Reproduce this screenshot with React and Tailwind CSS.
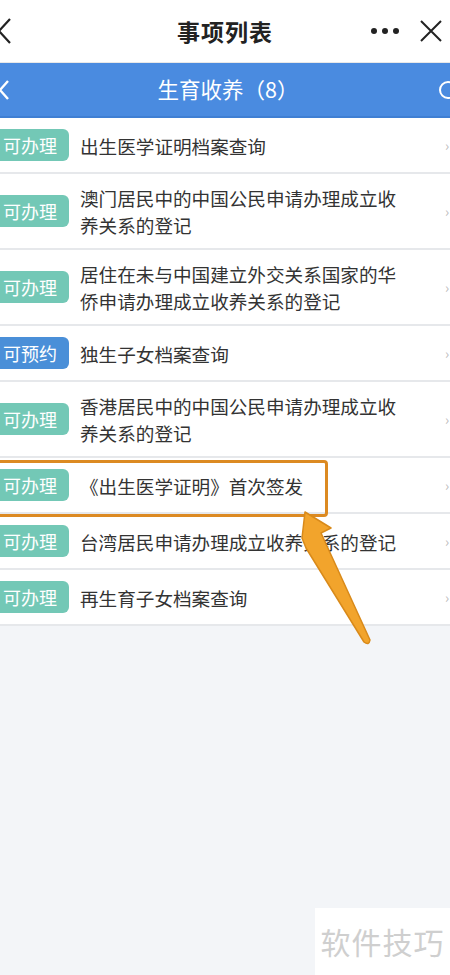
import React from "react";

const items = [
  { badge: "可办理", blue: false, lines: ["出生医学证明档案查询"] },
  { badge: "可办理", blue: false, lines: ["澳门居民中的中国公民申请办理成立收", "养关系的登记"] },
  { badge: "可办理", blue: false, lines: ["居住在未与中国建立外交关系国家的华", "侨申请办理成立收养关系的登记"] },
  { badge: "可预约", blue: true, lines: ["独生子女档案查询"] },
  { badge: "可办理", blue: false, lines: ["香港居民中的中国公民申请办理成立收", "养关系的登记"] },
  { badge: "可办理", blue: false, lines: ["《出生医学证明》首次签发"] },
  { badge: "可办理", blue: false, lines: ["台湾居民申请办理成立收养关系的登记"] },
  { badge: "可办理", blue: false, lines: ["再生育子女档案查询"] },
];

const font = { fontFamily: '"Noto Sans CJK SC", "Noto Sans", sans-serif' };

export default function App() {
  return (
    <div
      className="relative w-[450px] h-[975px] overflow-hidden bg-[#f3f5f8] text-[#333]"
      style={font}
    >
      {/* top bar */}
      <div className="h-[63px] bg-white grid grid-cols-[1fr_auto_1fr] items-center border-b border-[#e8e8e8]">
        <div className="flex items-center">
          <svg width="16" height="28" viewBox="0 0 16 28" className="-ml-[4px]">
            <path d="M14 2 L3 14 L14 26" fill="none" stroke="#222" strokeWidth="2.2" />
          </svg>
        </div>
        <div className="text-[23px] font-bold text-[#222] tracking-[1px]">事项列表</div>
        <div className="flex items-center justify-end gap-[20px] pr-[7px]">
          <div className="flex gap-[5px]">
            <span className="w-[6px] h-[6px] rounded-full bg-[#222]"></span>
            <span className="w-[6px] h-[6px] rounded-full bg-[#222]"></span>
            <span className="w-[6px] h-[6px] rounded-full bg-[#222]"></span>
          </div>
          <svg width="24" height="24" viewBox="0 0 24 24">
            <path d="M2 2 L22 22 M22 2 L2 22" stroke="#222" strokeWidth="2" />
          </svg>
        </div>
      </div>

      {/* blue bar */}
      <div className="h-[55px] bg-[#4a8be0] grid grid-cols-[1fr_auto_1fr] items-center border-b-2 border-[#3f7fd3]">
        <div className="flex items-center">
          <svg width="14" height="24" viewBox="0 0 14 24" className="-ml-[3px]">
            <path d="M11 3 L3 12 L11 21" fill="none" stroke="#fff" strokeWidth="2.4" />
          </svg>
        </div>
        <div className="text-[21.5px] text-white ml-[6px]">生育收养（8）</div>
        <div className="flex justify-end -mr-[8px]">
          <svg width="20" height="20" viewBox="0 0 20 20">
            <circle cx="10" cy="10" r="8" fill="none" stroke="#fff" strokeWidth="2" />
          </svg>
        </div>
      </div>

      {/* list */}
      <div className="flex flex-col gap-[2px] bg-[#e6e8eb] pb-[2px]">
        {items.map((it, i) => (
          <div
            key={i}
            className="bg-white flex items-center min-h-[54px] py-[10px]"
          >
            <div
              className={
                "-ml-[5px] w-[74px] h-[32px] shrink-0 rounded-[6px] flex items-center pl-[8px] text-[18px] text-white " +
                (it.blue ? "bg-[#4a8fd8]" : "bg-[#73c8b6]")
              }
            >
              {it.badge}
            </div>
            <div className="ml-[11px] flex-1 text-[18.6px] leading-[27px] text-[#333]">
              {it.lines.map((l, j) => (
                <div key={j}>{l}</div>
              ))}
            </div>
            <div className="w-[6px] shrink-0 text-[#bbb] text-[14px] leading-none -mr-[1px]">›</div>
          </div>
        ))}
      </div>

      {/* watermark */}
      <div className="absolute left-[315px] top-[908px] w-[135px] h-[67px] bg-white flex items-center justify-center">
        <span className="text-[30px] text-[#cfcfcf] tracking-[1px]">软件技巧</span>
      </div>

      {/* highlight box */}
      <div className="absolute left-[-4px] top-[460px] w-[332px] h-[57px] border-[3px] border-[#dc8a22] rounded-[4px]"></div>

      {/* arrow */}
      <svg className="absolute left-0 top-0 pointer-events-none" width="450" height="975" viewBox="0 0 450 975">
        <path
          d="M305 512 L331 528 L321 533 L370 640 Q369 646 364 642 L306 548 L302 538 Z"
          fill="#f2a42c"
          stroke="#d98a1a"
          strokeWidth="1.5"
          strokeLinejoin="round"
        />
      </svg>
    </div>
  );
}
